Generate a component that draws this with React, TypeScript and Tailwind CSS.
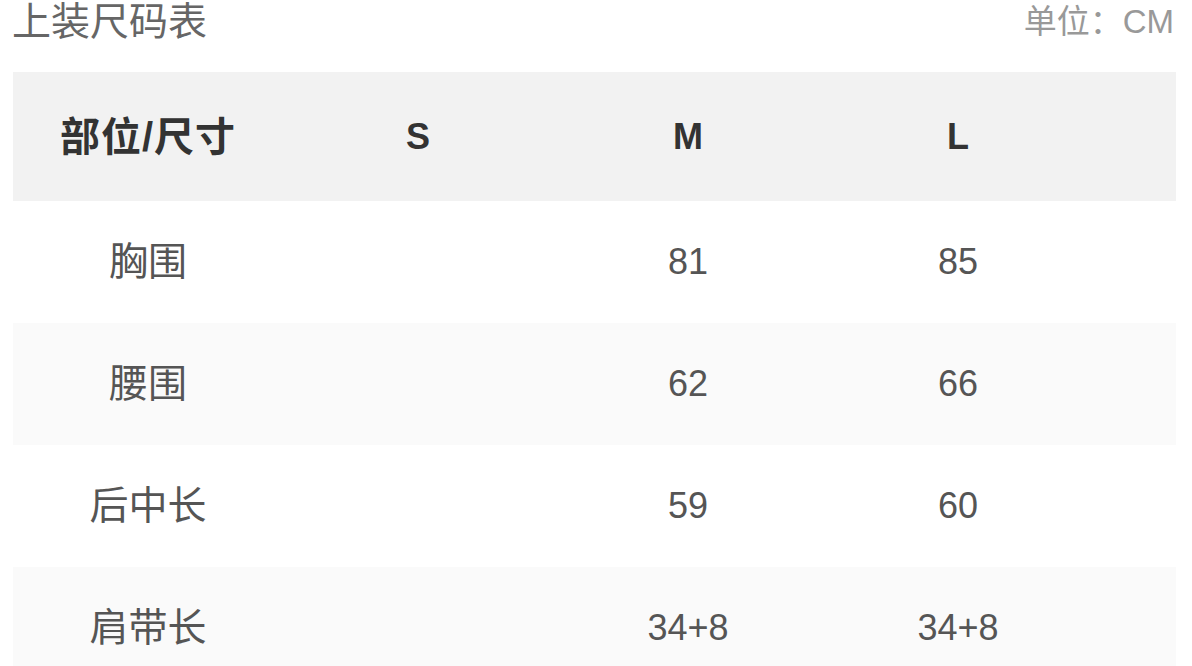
const font = { fontFamily: '"Liberation Sans", "Noto Sans CJK SC", sans-serif' };

const rows = [
  { label: '胸围', s: '', m: '81', l: '85' },
  { label: '腰围', s: '', m: '62', l: '66' },
  { label: '后中长', s: '', m: '59', l: '60' },
  { label: '肩带长', s: '', m: '34+8', l: '34+8' },
];

export default function App() {
  return (
    <div className="h-[666px] w-[1192px] overflow-hidden bg-white" style={font}>
      <div className="flex h-[72px] items-start justify-between pl-[12px] pr-[18px]">
        <span className="text-[39px] leading-[44px] text-[#666]">上装尺码表</span>
        <span className="text-[33px] leading-[44px] text-[#999]">单位：CM</span>
      </div>
      <div className="mx-[13px] flex w-[1163px] flex-col">
        <div className="grid h-[129px] grid-cols-[270px_270px_270px_270px_1fr] items-center bg-[#f2f2f2] text-[#333]">
          <span className="text-center text-[40px] font-bold tracking-[1px]">部位/尺寸</span>
          <span className="text-center text-[36px] font-bold">S</span>
          <span className="text-center text-[36px] font-bold">M</span>
          <span className="text-center text-[36px] font-bold">L</span>
          <span />
        </div>
        {rows.map((r, i) => (
          <div
            key={r.label}
            className={`grid h-[122px] shrink-0 grid-cols-[270px_270px_270px_270px_1fr] items-center text-[36px] text-[#555] ${
              i % 2 === 1 ? 'bg-[#fafafa]' : 'bg-white'
            }`}
          >
            <span className="text-center text-[39px]">{r.label}</span>
            <span className="text-center">{r.s}</span>
            <span className="text-center">{r.m}</span>
            <span className="text-center">{r.l}</span>
            <span />
          </div>
        ))}
      </div>
    </div>
  );
}
